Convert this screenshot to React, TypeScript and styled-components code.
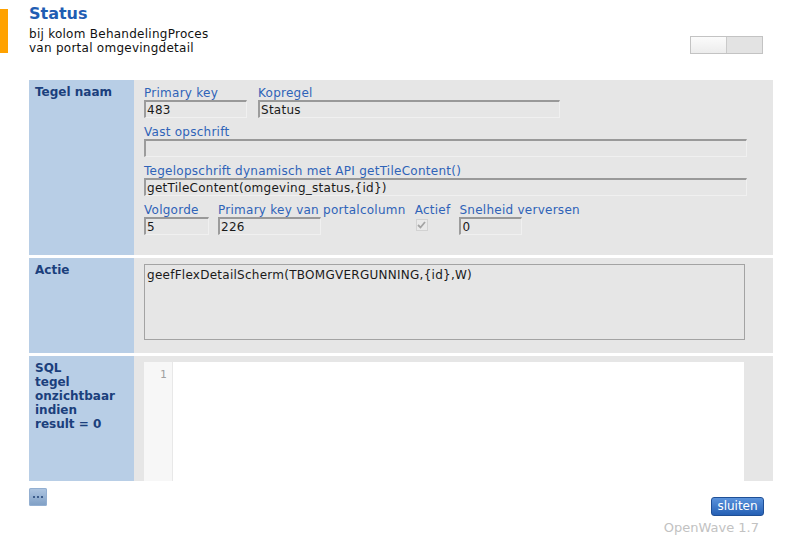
import React from 'react'
import styled, { createGlobalStyle } from 'styled-components'

const GlobalStyle = createGlobalStyle`
  body {
    margin: 0;
    background: #ffffff;
    font-family: 'DejaVu Sans', Verdana, sans-serif;
    letter-spacing: 0.26px;
  }
`

const Header = styled.div`
  display: flex;
  align-items: flex-start;
  height: 80px;
  box-sizing: border-box;
  padding: 4px 26px 0 0;
`

const OrangeBar = styled.div`
  flex-shrink: 0;
  width: 8px;
  height: 44px;
  margin: 5px 21px 0 0;
  background: #ffa200;
`

const TitleBlock = styled.div`
  flex: 1;
`

const Title = styled.div`
  font-size: 16px;
  font-weight: bold;
  line-height: 20px;
  margin-bottom: 3px;
  letter-spacing: 0;
  color: #1f5db3;
`

const SubTitle = styled.div`
  font-size: 12px;
  line-height: 14px;
  color: #111;
`

const Toggle = styled.div`
  display: flex;
  margin-top: 32px;
  width: 73px;
  height: 18px;
  box-sizing: border-box;
  border: 1px solid #c3c3c3;
`

const ToggleHalf = styled.div<{ $on?: boolean }>`
  flex: 1;
  background: ${(p) => (p.$on ? 'linear-gradient(#fbfbfb, #ececec)' : '#e3e3e3')};
  border-left: ${(p) => (p.$on ? 'none' : '1px solid #cacaca')};
`

const Panel = styled.div`
  display: flex;
  flex-direction: column;
  gap: 3px;
  margin-left: 29px;
  width: 744px;
`

const Row = styled.div<{ $height: number }>`
  display: grid;
  grid-template-columns: 105px 1fr;
  height: ${(p) => p.$height}px;
`

const RowLabel = styled.div`
  background: #b8cee6;
  padding: 5px 6px;
  font-size: 12px;
  font-weight: bold;
  line-height: 14px;
  letter-spacing: 0;
  color: #1b3f7c;
`

const RowBody = styled.div<{ $pad: string }>`
  background: #e6e6e6;
  padding: ${(p) => p.$pad};
  overflow: hidden;
`

const FieldLine = styled.div<{ $gap?: number }>`
  display: flex;
  gap: ${(p) => p.$gap ?? 11}px;
  margin-bottom: 7px;
`

const Field = styled.div`
  display: flex;
  flex-direction: column;
`

const FieldLabel = styled.div`
  font-size: 12px;
  line-height: 14px;
  height: 14px;
  color: #2f63b8;
  white-space: nowrap;
`

const TextInput = styled.div<{ $width: number }>`
  width: ${(p) => p.$width}px;
  height: 18px;
  box-sizing: border-box;
  padding: 0 1px;
  border-top: 2px solid #999999;
  border-left: 2px solid #9c9c9c;
  border-bottom: 1px solid #f0f0f0;
  border-right: 1px solid #f0f0f0;
  font-size: 12px;
  line-height: 17px;
  color: #1a1a1a;
  white-space: nowrap;
`

const CheckBox = styled.div`
  width: 12px;
  height: 12px;
  margin: 2px 0 0 1px;
  box-sizing: border-box;
  border: 1px solid #d2d2d2;
  background: #e9e9e9;
  display: flex;
  align-items: center;
  justify-content: center;
`

const TextArea = styled.div`
  width: 601px;
  height: 76px;
  box-sizing: border-box;
  border: 1px solid #a3a3a3;
  padding: 3px 2px;
  font-size: 12px;
  line-height: 15px;
  color: #1a1a1a;
`

const Editor = styled.div`
  display: grid;
  grid-template-columns: 29px 1fr;
  width: 600px;
  height: 119px;
`

const Gutter = styled.div`
  background: #f7f7f7;
  border-right: 1px solid #e8e8e8;
  padding: 6px 5px 0 0;
  text-align: right;
  font-family: 'DejaVu Sans Mono', monospace;
  font-size: 11px;
  line-height: 14px;
  color: #a0a0a0;
`

const Code = styled.div`
  background: #ffffff;
`

const Footer = styled.div`
  display: flex;
  justify-content: space-between;
  align-items: flex-start;
  margin: 7px 0 0 29px;
  width: 744px;
`

const DotsButton = styled.div`
  display: flex;
  align-items: center;
  justify-content: center;
  width: 18px;
  height: 18px;
  border-radius: 2px;
  background: linear-gradient(#b0c7e2, #7e9ec4);
  box-shadow: inset 0 0 0 1px #93afd1;
`

const Actions = styled.div`
  display: flex;
  flex-direction: column;
  align-items: flex-end;
  margin-top: 9px;
  padding-right: 9px;
`

const CloseButton = styled.div`
  width: 53px;
  height: 19px;
  box-sizing: border-box;
  border: 1px solid #1f4f96;
  border-radius: 3px;
  background: linear-gradient(#5b93dc, #2560b5);
  color: #ffffff;
  font-size: 12px;
  line-height: 17px;
  letter-spacing: 0;
  text-align: center;
`

const Version = styled.div`
  margin: 4px 5px 0 0;
  font-size: 13px;
  line-height: 15px;
  letter-spacing: 0;
  color: #c2c2c2;
`

export default function App() {
  return (
    <>
      <GlobalStyle />
      <Header>
        <OrangeBar />
        <TitleBlock>
          <Title>Status</Title>
          <SubTitle>bij kolom BehandelingProces</SubTitle>
          <SubTitle>van portal omgevingdetail</SubTitle>
        </TitleBlock>
        <Toggle>
          <ToggleHalf $on />
          <ToggleHalf />
        </Toggle>
      </Header>

      <Panel>
        <Row $height={175}>
          <RowLabel>Tegel naam</RowLabel>
          <RowBody $pad="6px 26px 0 10px">
            <FieldLine>
              <Field>
                <FieldLabel>Primary key</FieldLabel>
                <TextInput $width={103}>483</TextInput>
              </Field>
              <Field>
                <FieldLabel>Kopregel</FieldLabel>
                <TextInput $width={302}>Status</TextInput>
              </Field>
            </FieldLine>
            <FieldLine>
              <Field>
                <FieldLabel>Vast opschrift</FieldLabel>
                <TextInput $width={603} />
              </Field>
            </FieldLine>
            <FieldLine>
              <Field>
                <FieldLabel>Tegelopschrift dynamisch met API getTileContent()</FieldLabel>
                <TextInput $width={603}>getTileContent(omgeving_status,{'{id}'})</TextInput>
              </Field>
            </FieldLine>
            <FieldLine $gap={9}>
              <Field>
                <FieldLabel>Volgorde</FieldLabel>
                <TextInput $width={65}>5</TextInput>
              </Field>
              <Field>
                <FieldLabel>Primary key van portalcolumn</FieldLabel>
                <TextInput $width={103}>226</TextInput>
              </Field>
              <Field>
                <FieldLabel>Actief</FieldLabel>
                <CheckBox>
                  <svg width="9" height="8" viewBox="0 0 9 8">
                    <path d="M1 4 L3.5 6.5 L8 1" fill="none" stroke="#a4a4a4" strokeWidth="1.8" />
                  </svg>
                </CheckBox>
              </Field>
              <Field>
                <FieldLabel>Snelheid verversen</FieldLabel>
                <TextInput $width={63}>0</TextInput>
              </Field>
            </FieldLine>
          </RowBody>
        </Row>

        <Row $height={95}>
          <RowLabel>Actie</RowLabel>
          <RowBody $pad="6px 28px 0 10px">
            <TextArea>geefFlexDetailScherm(TBOMGVERGUNNING,{'{id}'},W)</TextArea>
          </RowBody>
        </Row>

        <Row $height={125}>
          <RowLabel>
            SQL
            <br />
            tegel
            <br />
            onzichtbaar
            <br />
            indien
            <br />
            result = 0
          </RowLabel>
          <RowBody $pad="6px 29px 0 10px">
            <Editor>
              <Gutter>1</Gutter>
              <Code />
            </Editor>
          </RowBody>
        </Row>
      </Panel>

      <Footer>
        <DotsButton>
          <svg width="12" height="4" viewBox="0 0 12 4">
            <rect x="1" y="1" width="2" height="2" fill="#3d5d8c" />
            <rect x="5" y="1" width="2" height="2" fill="#3d5d8c" />
            <rect x="9" y="1" width="2" height="2" fill="#3d5d8c" />
          </svg>
        </DotsButton>
        <Actions>
          <CloseButton>sluiten</CloseButton>
          <Version>OpenWave 1.7</Version>
        </Actions>
      </Footer>
    </>
  )
}
